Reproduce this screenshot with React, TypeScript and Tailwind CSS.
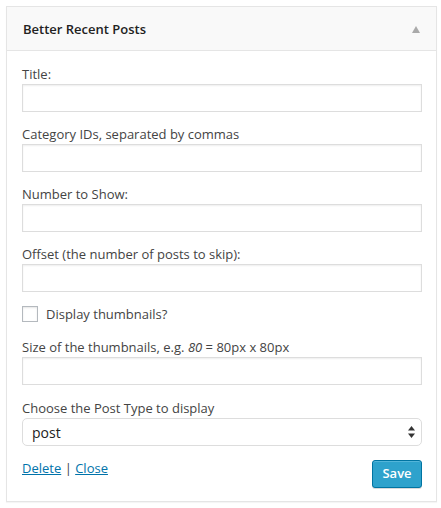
import React, { useState } from 'react';

const fields = [
    { id: 'title', label: 'Title:' },
    { id: 'cats', label: 'Category IDs, separated by commas' },
    { id: 'count', label: 'Number to Show:' },
    { id: 'offset', label: 'Offset (the number of posts to skip):' },
];

const inputClass =
    'block w-full h-[28px] border border-[#dddddd] bg-white shadow-[inset_0_1px_2px_rgba(0,0,0,0.07)] outline-none px-2 text-[13px] text-[#333]';

const App: React.FC = () => {
    const [thumbs, setThumbs] = useState(false);
    const [postType, setPostType] = useState('post');

    return (
        <div className="p-[6px] bg-white font-['Open_Sans',sans-serif] text-[13px] text-[#444]">
            <div className="w-[431px] border border-[#e5e5e5] bg-white shadow-[0_1px_1px_rgba(0,0,0,0.04)]">
                <div className="h-[44px] flex items-center justify-between pl-[16px] pr-[16px] bg-[#f9f9f9] border-b border-[#e5e5e5]">
                    <h3 className="text-[13px] font-semibold text-[#222] leading-5">Better Recent Posts</h3>
                    <svg width="8" height="7" viewBox="0 0 8 7" className="mt-[1px]">
                        <polygon points="4,0 8,7 0,7" fill="#aaaaaa" />
                    </svg>
                </div>

                <div className="pl-[15px] pr-[14px] pt-[13px] pb-[13px]">
                    {fields.map(f => (
                        <div key={f.id} className="mb-[12px]">
                            <label htmlFor={f.id} className="block leading-5">{f.label}</label>
                            <input id={f.id} type="text" className={inputClass} />
                        </div>
                    ))}

                    <label className="flex items-center leading-5 mt-[11px] mb-[13px]">
                        <input
                            type="checkbox"
                            checked={thumbs}
                            onChange={e => setThumbs(e.target.checked)}
                            className="appearance-none w-[16px] h-[16px] border border-[#b4b9be] bg-white shadow-[inset_0_1px_2px_rgba(0,0,0,0.1)] mr-[8px]"
                        />
                        <span>Display thumbnails?</span>
                    </label>

                    <div className="mb-[13px]">
                        <label htmlFor="size" className="block leading-5">
                            Size of the thumbnails, e.g. <em>80</em> = 80px x 80px
                        </label>
                        <input id="size" type="text" className={inputClass} />
                    </div>

                    <div>
                        <label htmlFor="ptype" className="block leading-5">Choose the Post Type to display</label>
                        <div className="relative">
                            <select
                                id="ptype"
                                value={postType}
                                onChange={e => setPostType(e.target.value)}
                                className="appearance-none block w-full h-[28px] rounded-[5px] border border-[#dddddd] bg-white pl-[9px] text-[14px] text-[#222] outline-none"
                            >
                                <option value="post">post</option>
                                <option value="page">page</option>
                            </select>
                            <svg width="7" height="12" viewBox="0 0 7 12" className="absolute right-[7px] top-[8px] pointer-events-none">
                                <polygon points="3.5,0 7,4.5 0,4.5" fill="#333" />
                                <polygon points="0,7.5 7,7.5 3.5,12" fill="#333" />
                            </svg>
                        </div>
                    </div>

                    <div className="flex items-start justify-between mt-[12px]">
                        <div className="leading-5">
                            <a href="#" className="text-[#0073aa] underline">Delete</a>
                            <span className="text-[#444]"> | </span>
                            <a href="#" className="text-[#0073aa] underline">Close</a>
                        </div>
                        <button className="h-[28px] w-[50px] mt-[2px] rounded-[3px] border border-[#0074a2] bg-[#2ea2cc] text-white text-[13px] font-semibold shadow-[inset_0_1px_0_rgba(120,200,230,0.5),0_1px_0_rgba(0,0,0,0.15)]">
                            Save
                        </button>
                    </div>
                </div>
            </div>
        </div>
    );
};

export default App;
